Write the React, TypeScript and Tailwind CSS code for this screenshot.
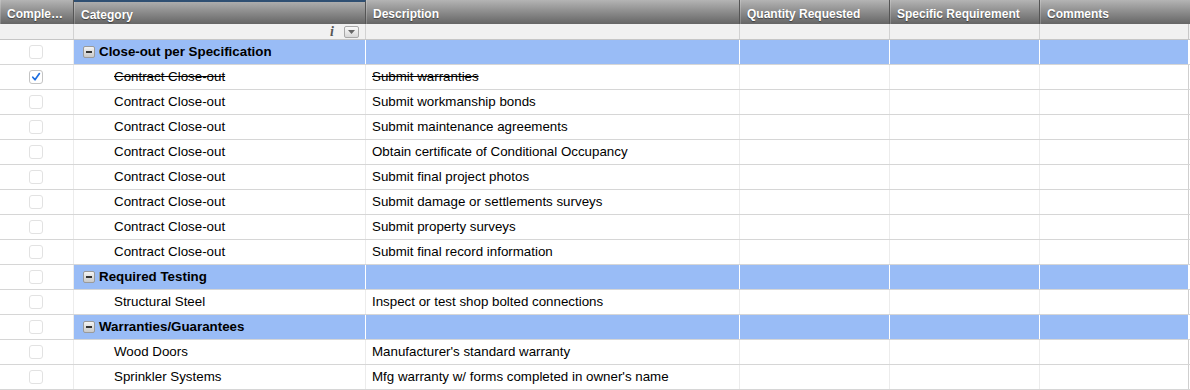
import React from "react";

type Row =
  | { kind: "group"; title: string }
  | { kind: "item"; cat: string; desc: string; done?: boolean };

const rows: Row[] = [
  { kind: "group", title: "Close-out per Specification" },
  { kind: "item", cat: "Contract Close-out", desc: "Submit warranties", done: true },
  { kind: "item", cat: "Contract Close-out", desc: "Submit workmanship bonds" },
  { kind: "item", cat: "Contract Close-out", desc: "Submit maintenance agreements" },
  { kind: "item", cat: "Contract Close-out", desc: "Obtain certificate of Conditional Occupancy" },
  { kind: "item", cat: "Contract Close-out", desc: "Submit final project photos" },
  { kind: "item", cat: "Contract Close-out", desc: "Submit damage or settlements surveys" },
  { kind: "item", cat: "Contract Close-out", desc: "Submit property surveys" },
  { kind: "item", cat: "Contract Close-out", desc: "Submit final record information" },
  { kind: "group", title: "Required Testing" },
  { kind: "item", cat: "Structural Steel", desc: "Inspect or test shop bolted connections" },
  { kind: "group", title: "Warranties/Guarantees" },
  { kind: "item", cat: "Wood Doors", desc: "Manufacturer's standard warranty" },
  { kind: "item", cat: "Sprinkler Systems", desc: "Mfg warranty w/ forms completed in owner's name" },
];

const cols = "grid grid-cols-[74px_292px_374px_150px_150px_150px]";

function Checkbox({ checked }: { checked?: boolean }) {
  return (
    <div
      className={`w-[14px] h-[14px] rounded-[3px] border bg-white flex items-center justify-center ${
        checked ? "border-[#c4c4c4]" : "border-[#e2e2e2]"
      }`}
    >
      {checked && (
        <svg width="10" height="10" viewBox="0 0 10 10">
          <path d="M1.8 5.2 L4 7.8 L8.4 1.6" fill="none" stroke="#1f6fe0" strokeWidth="1.7" strokeLinecap="round" strokeLinejoin="round" />
        </svg>
      )}
    </div>
  );
}

function Minus() {
  return (
    <div className="w-[12px] h-[12px] rounded-[2px] border border-[#9a9a9a] bg-gradient-to-b from-[#f4f4f4] to-[#c9c9c9] flex items-center justify-center">
      <div className="w-[6px] h-[2px] bg-[#333]" />
    </div>
  );
}

export default function App() {
  const headerCell =
    "h-[24px] flex items-center pt-[3px] pl-[7px] text-white font-bold text-[12px] whitespace-nowrap overflow-hidden [text-shadow:0_1px_1px_rgba(0,0,0,0.45)] border-r border-r-[#555] shadow-[inset_1px_0_0_rgba(255,255,255,0.2)]";
  return (
    <div className="w-[1190px] h-[390px] overflow-hidden bg-white font-['Liberation_Sans',Arial,sans-serif] text-[13.33px] text-black">
      {/* Header */}
      <div className={`${cols} bg-gradient-to-b from-[#b4b4b4] to-[#666666]`}>
        <div className={`${headerCell} pl-[6px]`}>Comple…</div>
        <div className={`${headerCell} border-t-2 border-t-[#2f4f72] pt-[1px]`}>Category</div>
        <div className={headerCell}>Description</div>
        <div className={headerCell}>Quantity Requested</div>
        <div className={headerCell}>Specific Requirement</div>
        <div className={`${headerCell} border-r-0`}>Comments</div>
      </div>
      {/* Filter row */}
      <div className={`${cols} h-[16px] bg-[#f1f1f1] border-b border-b-[#c6c6c6]`}>
        <div className="border-r border-r-[#d2d2d2]" />
        <div className="border-r border-r-[#d2d2d2] flex items-center justify-end pr-[6px] gap-[10px]">
          <span className="font-['Liberation_Serif',serif] italic font-bold text-[14px] text-[#555] leading-none">i</span>
          <div className="w-[15px] h-[12px] rounded-[2px] border border-[#a8a8a8] bg-gradient-to-b from-[#fafafa] to-[#d8d8d8] flex items-center justify-center">
            <svg width="7" height="4" viewBox="0 0 7 4">
              <path d="M0 0 L7 0 L3.5 4 Z" fill="#666" />
            </svg>
          </div>
        </div>
        <div className="border-r border-r-[#d2d2d2]" />
        <div className="border-r border-r-[#d2d2d2]" />
        <div className="border-r border-r-[#d2d2d2]" />
        <div className="border-r border-r-[#c8c8c8] mr-[1px]" />
      </div>
      {/* Body */}
      {rows.map((r, i) =>
        r.kind === "group" ? (
          <div key={i} className={`${cols} h-[25px] border-b border-b-[#d6d6d6]`}>
            <div className="flex items-center justify-center pr-[2px] border-r border-r-[#ececec] bg-white">
              <Checkbox />
            </div>
            <div className="bg-[#99bcf6] border-r border-r-white flex items-center pl-[9px] gap-[4px] font-bold">
              <Minus />
              <span>{r.title}</span>
            </div>
            <div className="bg-[#99bcf6] border-r border-r-white" />
            <div className="bg-[#99bcf6] border-r border-r-white" />
            <div className="bg-[#99bcf6] border-r border-r-white" />
            <div className="bg-[#99bcf6] border-r-2 border-r-white" />
          </div>
        ) : (
          <div key={i} className={`${cols} h-[25px] border-b border-b-[#d6d6d6]`}>
            <div className="flex items-center justify-center pr-[2px] border-r border-r-[#ececec]">
              <Checkbox checked={r.done} />
            </div>
            <div className={`flex items-center pl-[40px] border-r border-r-[#ececec] ${r.done ? "line-through" : ""}`}>
              {r.cat}
            </div>
            <div className={`flex items-center pl-[6px] border-r border-r-[#ececec] ${r.done ? "line-through" : ""}`}>
              {r.desc}
            </div>
            <div className="border-r border-r-[#ececec]" />
            <div className="border-r border-r-[#ececec]" />
            <div className="border-r border-r-[#cfcfcf] mr-[1px]" />
          </div>
        )
      )}
    </div>
  );
}
